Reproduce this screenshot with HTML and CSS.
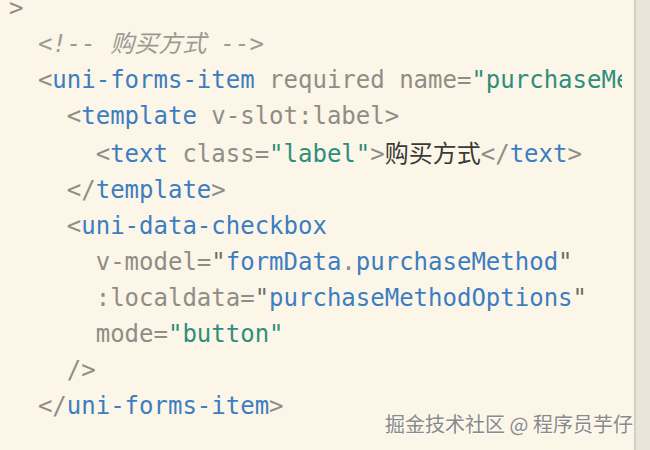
FILE: index.html
```html
<!DOCTYPE html>
<html lang="zh">
<head>
<meta charset="utf-8">
<link rel="stylesheet" href="styles.css">
</head>
<body>
<div class="screen">
  <main class="editor">
<pre class="code"><span class="p">&gt;</span>
  <span class="c">&lt;!-- 购买方式 --&gt;</span>
  <span class="p">&lt;</span><span class="t">uni-forms-item</span> <span class="a">required name=</span><span class="s">"purchaseMethod"</span><span class="p">&gt;</span>
    <span class="p">&lt;</span><span class="t">template</span> <span class="a">v-slot:label</span><span class="p">&gt;</span>
      <span class="p">&lt;</span><span class="t">text</span> <span class="a">class=</span><span class="s">"label"</span><span class="p">&gt;</span><span class="x">购买方式</span><span class="p">&lt;/</span><span class="t">text</span><span class="p">&gt;</span>
    <span class="p">&lt;/</span><span class="t">template</span><span class="p">&gt;</span>
    <span class="p">&lt;</span><span class="t">uni-data-checkbox</span>
      <span class="a">v-model=</span><span class="q">"</span><span class="t">formData</span><span class="p">.</span><span class="t">purchaseMethod</span><span class="q">"</span>
      <span class="a">:localdata=</span><span class="q">"</span><span class="t">purchaseMethodOptions</span><span class="q">"</span>
      <span class="a">mode=</span><span class="s">"button"</span>
    <span class="p">/&gt;</span>
  <span class="p">&lt;/</span><span class="t">uni-forms-item</span><span class="p">&gt;</span>
</pre>
  </main>
  <aside class="gutter"></aside>
  <div class="mark">掘金技术社区 @ 程序员芋仔</div>
</div>
</body>
</html>
```

FILE: styles.css
```css
html, body {
  margin: 0;
  padding: 0;
  background: #fcf6e8;
}
.screen {
  position: relative;
  display: flex;
  width: 650px;
  height: 450px;
  overflow: hidden;
  background: #fcf6e8;
}
.editor {
  flex: 1;
  overflow: hidden;
  min-width: 0;
  margin-right: 12px;
}
.code {
  margin: -10px 0 0 0;
  padding: 0 0 0 9px;
  font-family: "DejaVu Sans Mono", "Noto Sans CJK SC", monospace;
  font-size: 24px;
  line-height: 36px;
  color: #8c8a80;
  white-space: pre;
}
.p { color: #8f8d85; }
.a { color: #8f8d85; }
.t { color: #3d7dc1; }
.s { color: #2e8e7c; }
.q { color: #6f6d66; }
.x { color: #3a3a36; font-family: "Noto Sans CJK SC", sans-serif; }
.c {
  color: #9c9a92;
  font-style: italic;
}
.gutter {
  width: 14px;
  flex: none;
  background: #e9e6d9;
  border-left: 2px solid #d3cfc2;
}
.mark {
  position: absolute;
  left: 385px;
  top: 410px;
  font-family: "Noto Sans CJK SC", sans-serif;
  font-size: 20px;
  line-height: 28px;
  color: #8a8a86;
  text-shadow: 1px 1px 0 #ffffff;
  white-space: nowrap;
}
```
